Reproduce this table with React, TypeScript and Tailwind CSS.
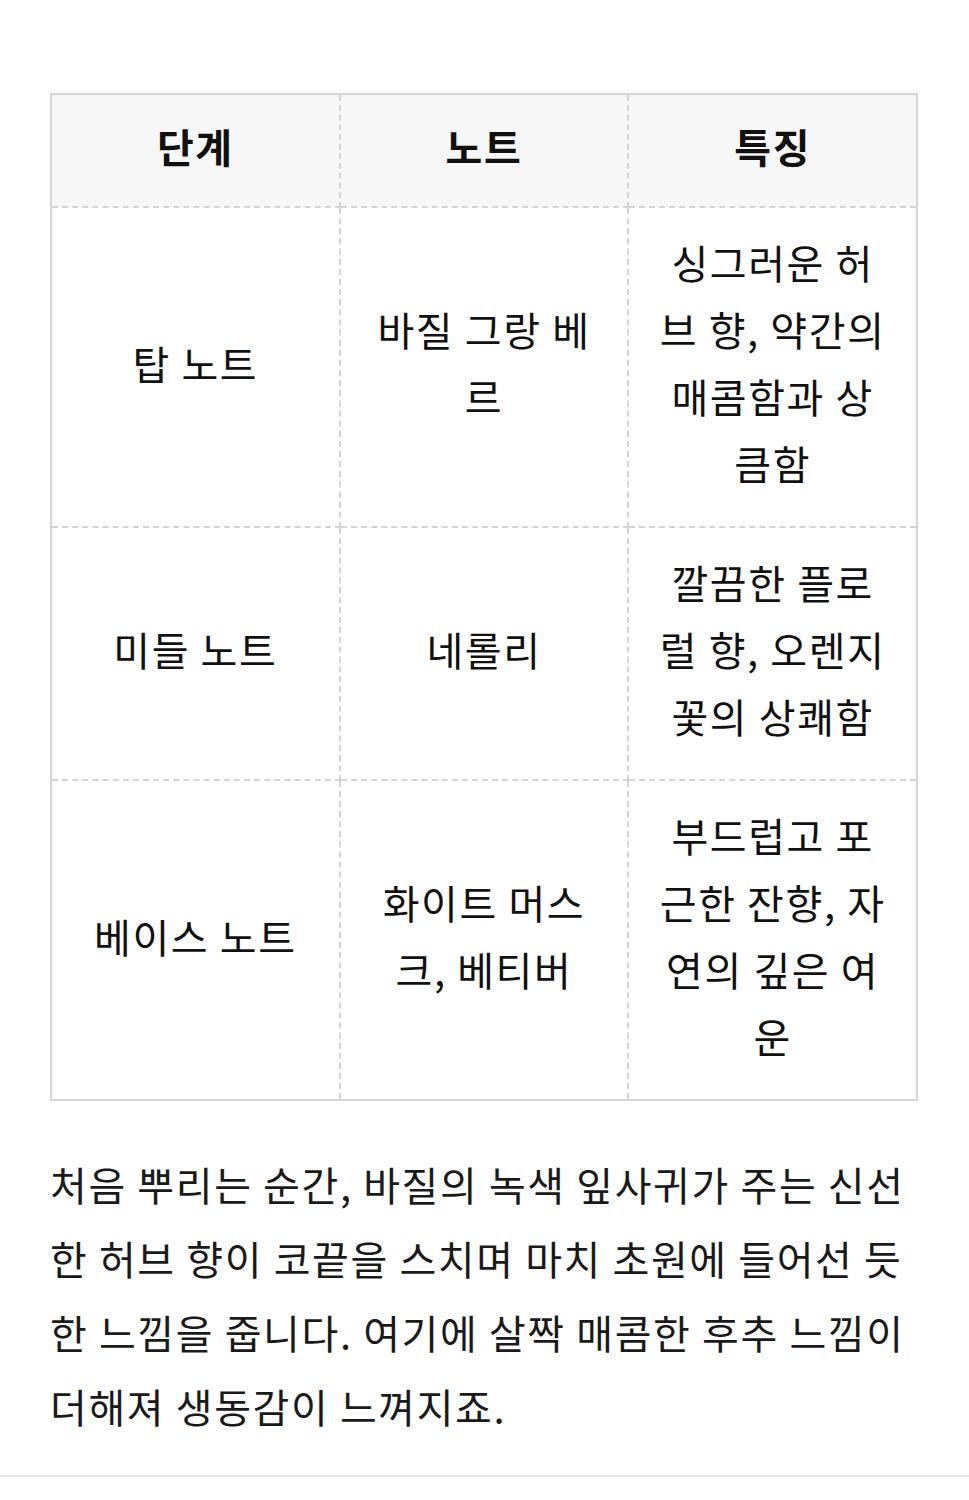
const rows = [
  { stage: "탑 노트", note: "바질 그랑 베르", desc: "싱그러운 허브 향, 약간의 매콤함과 상큼함" },
  { stage: "미들 노트", note: "네롤리", desc: "깔끔한 플로럴 향, 오렌지 꽃의 상쾌함" },
  { stage: "베이스 노트", note: "화이트 머스크, 베티버", desc: "부드럽고 포근한 잔향, 자연의 깊은 여운" },
];

const base = "border-2 border-dashed border-[#d4d4d4] px-[28px] text-center align-middle";
const cell = base + " pt-[21px] pb-[29px]";
const head = base + " pt-[18px] pb-[26px] font-bold";

export default function App() {
  return (
    <div
      className="min-h-[1500px] bg-white text-[#111111]"
      style={{ fontFamily: '"Noto Sans CJK KR", "Noto Sans", sans-serif' }}
    >
      <div className="px-[50px] pt-[93px] pr-[51px]">
        <table className="w-full table-fixed border-collapse border-2 border-solid border-[#d6d6d6] text-[40px] leading-[67px] tracking-[1.6px] font-normal">
          <thead>
            <tr className="bg-[#f7f7f7]">
              <th className={head}>단계</th>
              <th className={head}>노트</th>
              <th className={head}>특징</th>
            </tr>
          </thead>
          <tbody>
            {rows.map((row) => (
              <tr key={row.stage}>
                <td className={cell}>{row.stage}</td>
                <td className={cell}>{row.note}</td>
                <td className={cell}>{row.desc}</td>
              </tr>
            ))}
          </tbody>
        </table>

        <p className="mt-[46px] text-[40px] leading-[74px] tracking-[1.6px] font-normal text-[#1a1a1a]">
          처음 뿌리는 순간, 바질의 녹색 잎사귀가 주는 신선한 허브 향이 코끝을 스치며 마치 초원에 들어선 듯한 느낌을 줍니다. 여기에 살짝 매콤한 후추 느낌이 더해져 생동감이 느껴지죠.
        </p>
      </div>
      <div className="mt-[32px] h-[2px] bg-[#e8e8e8]" />
    </div>
  );
}
